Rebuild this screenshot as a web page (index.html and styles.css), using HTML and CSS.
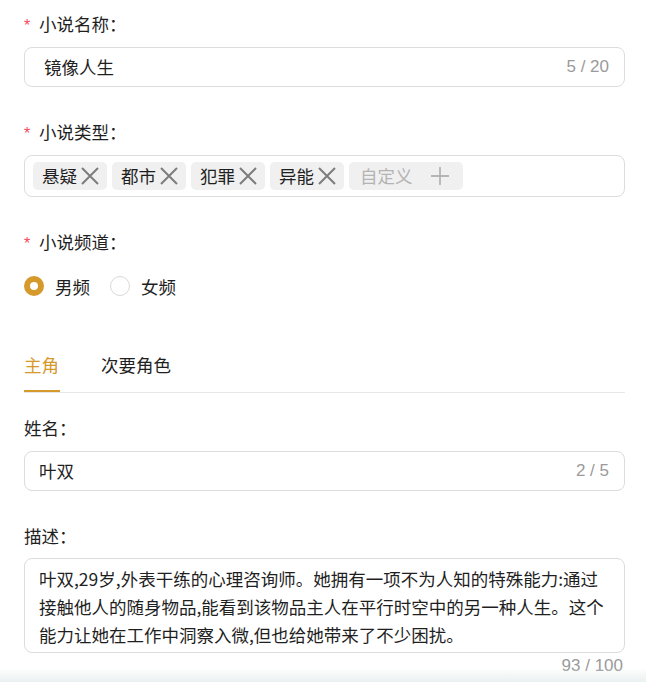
FILE: index.html
```html
<!DOCTYPE html>
<html lang="zh">
<head>
<meta charset="utf-8">
<link rel="stylesheet" href="styles.css">
</head>
<body>
<div class="form">
  <div class="field">
    <div class="label"><span class="req">*</span>小说名称：</div>
    <div class="input input-wide">
      <span class="value">镜像人生</span>
      <span class="count">5 / 20</span>
    </div>
  </div>

  <div class="field">
    <div class="label"><span class="req">*</span>小说类型：</div>
    <div class="tagbox">
      <span class="tag">悬疑<svg class="ico" viewBox="0 0 20 20"><path d="M2 2L18 18M18 2L2 18"/></svg></span>
      <span class="tag">都市<svg class="ico" viewBox="0 0 20 20"><path d="M2 2L18 18M18 2L2 18"/></svg></span>
      <span class="tag">犯罪<svg class="ico" viewBox="0 0 20 20"><path d="M2 2L18 18M18 2L2 18"/></svg></span>
      <span class="tag">异能<svg class="ico" viewBox="0 0 20 20"><path d="M2 2L18 18M18 2L2 18"/></svg></span>
      <span class="tag tag-add">自定义<svg class="ico ico-add" viewBox="0 0 20 20"><path d="M10 1V19M1 10H19"/></svg></span>
    </div>
  </div>

  <div class="field field-last">
    <div class="label"><span class="req">*</span>小说频道：</div>
    <div class="radios">
      <label class="radio"><span class="dot dot-on"></span>男频</label>
      <label class="radio"><span class="dot"></span>女频</label>
    </div>
  </div>

  <div class="tabs">
    <div class="tab tab-active">主角</div>
    <div class="tab">次要角色</div>
  </div>

  <div class="field field-name">
    <div class="label">姓名：</div>
    <div class="input">
      <span class="value">叶双</span>
      <span class="count">2 / 5</span>
    </div>
  </div>

  <div class="field field-last">
    <div class="label">描述：</div>
    <div class="textarea">叶双,29岁,外表干练的心理咨询师。她拥有一项不为人知的特殊能力:通过接触他人的随身物品,能看到该物品主人在平行时空中的另一种人生。这个能力让她在工作中洞察入微,但也给她带来了不少困扰。</div>
    <div class="count-below">93 / 100</div>
  </div>
</div>
<div class="fade"></div>
</body>
</html>
```

FILE: styles.css
```css
html, body {
  margin: 0;
  padding: 0;
  background: #fff;
}
body {
  font-family: "Noto Sans CJK SC", "Noto Sans", sans-serif;
  color: #1f1f1f;
  font-size: 17.5px;
  overflow: hidden;
  height: 682px;
}
.form {
  padding: 12px 21px 0 24px;
}
.field {
  margin-bottom: 33px;
}
.field-last {
  margin-bottom: 0;
}
.label {
  height: 24px;
  line-height: 24px;
  font-size: 17.5px;
  margin-bottom: 11px;
  display: flex;
  align-items: center;
}
.req {
  color: #f5485b;
  font-family: "Liberation Sans", sans-serif;
  font-size: 16px;
  width: 15px;
  padding-top: 3px;
}
.input {
  box-sizing: border-box;
  height: 40px;
  border: 1px solid #dcdcdc;
  border-radius: 8px;
  display: flex;
  align-items: center;
  justify-content: space-between;
  padding: 0 15px 0 14px;
}
.input-wide {
  padding-left: 19px;
}
.value {
  font-size: 17.5px;
  line-height: 24px;
}
.count {
  color: #9a9a9a;
  font-family: "Liberation Sans", sans-serif;
  font-size: 17px;
}
.tagbox {
  box-sizing: border-box;
  height: 42px;
  border: 1px solid #dcdcdc;
  border-radius: 8px;
  display: flex;
  align-items: center;
  gap: 5px;
  padding: 0 8px;
}
.tag {
  height: 28px;
  background: #f0f0f0;
  border-radius: 5px;
  display: flex;
  align-items: center;
  padding: 0 7px 0 9px;
  font-size: 17.5px;
  line-height: 24px;
}
.ico {
  width: 20px;
  height: 20px;
  margin-left: 3px;
  fill: none;
  stroke: #7c7c7c;
  stroke-width: 2;
}
.tag-add {
  color: #b4b4b4;
  padding: 0 13px 0 11px;
}
.ico-add {
  margin-left: 17px;
  stroke: #b4b4b4;
  stroke-width: 1.8;
}
.radios {
  display: flex;
  align-items: center;
  height: 24px;
  margin-top: 20px;
}
.radio {
  display: flex;
  align-items: center;
  margin-right: 20px;
  font-size: 17.5px;
}
.dot {
  box-sizing: border-box;
  width: 20px;
  height: 20px;
  border-radius: 50%;
  border: 1px solid #d9d9d9;
  margin-right: 11px;
  background: #fff;
}
.dot-on {
  border: 6px solid #d6992b;
  background: #fff;
}
.tabs {
  display: flex;
  margin-top: 55px;
  border-bottom: 1px solid #e8e8e8;
  height: 39px;
  margin-bottom: 23px;
}
.tab {
  font-size: 17.5px;
  line-height: 24px;
  margin-right: 41px;
  padding-bottom: 14px;
}
.tab-active {
  color: #d6992b;
  border-bottom: 2px solid #d6992b;
  padding: 0 1px 13px 0;
}
.field-name {
  margin-bottom: 33px;
}
.textarea {
  box-sizing: border-box;
  border: 1px solid #dcdcdc;
  border-radius: 8px;
  padding: 6px 14px 4px 14px;
  font-size: 17.5px;
  line-height: 28px;
  height: 95px;
  margin-top: -1px;
}
.count-below {
  text-align: right;
  color: #9a9a9a;
  font-family: "Liberation Sans", sans-serif;
  font-size: 17px;
  line-height: 20px;
  margin-top: 3px;
  padding-right: 2px;
}
.fade {
  position: fixed;
  left: 0;
  right: 0;
  bottom: 0;
  height: 14px;
  background: linear-gradient(to bottom, rgba(235, 240, 240, 0), rgba(232, 238, 238, 0.9));
  pointer-events: none;
}
```
